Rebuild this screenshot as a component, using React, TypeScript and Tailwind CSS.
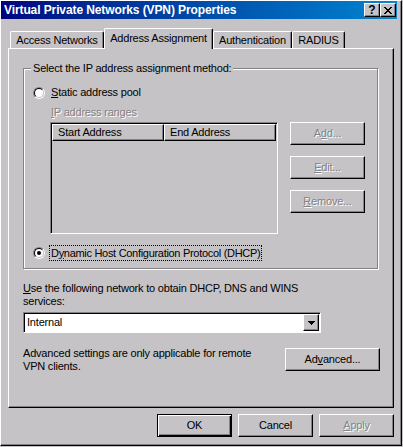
import React from "react";

const raised =
  "border border-t-white border-l-white border-r-black border-b-black shadow-[inset_-1px_-1px_0_#848284]";
const sunken =
  "border border-t-[#848284] border-l-[#848284] border-r-white border-b-white shadow-[inset_1px_1px_0_#000]";
const disabledText = "text-[#848284] [text-shadow:1px_1px_0_#fff]";

interface BtnProps {
  children: React.ReactNode;
  disabled?: boolean;
  isDefault?: boolean;
  width?: string;
}

const Btn: React.FC<BtnProps> = ({ children, disabled, isDefault, width }) => {
  const frame = isDefault
    ? "border border-black shadow-[inset_1px_1px_0_#fff,inset_-1px_-1px_0_#000,inset_-2px_-2px_0_#848284]"
    : raised;
  return (
    <div
      className={`${width ?? "w-[75px]"} h-[23px] shrink-0 flex items-center justify-center bg-[#c6c3c6] ${frame} ${
        disabled ? disabledText : "text-black"
      }`}
    >
      <span>{children}</span>
    </div>
  );
};

const Radio: React.FC<{ checked?: boolean }> = ({ checked }) => (
  <div className="w-[12px] h-[12px] shrink-0 rounded-full border border-t-[#848284] border-l-[#848284] border-r-white border-b-white">
    <div className="w-full h-full rounded-full border border-t-black border-l-black border-r-[#c6c3c6] border-b-[#c6c3c6] bg-white flex items-center justify-center">
      {checked && <div className="w-[4px] h-[4px] rounded-full bg-black" />}
    </div>
  </div>
);

const CloseGlyph = () => (
  <svg width="8" height="7" viewBox="0 0 8 7" shapeRendering="crispEdges">
    <rect x="0" y="0" width="2" height="1" />
    <rect x="6" y="0" width="2" height="1" />
    <rect x="1" y="1" width="2" height="1" />
    <rect x="5" y="1" width="2" height="1" />
    <rect x="2" y="2" width="4" height="1" />
    <rect x="3" y="3" width="2" height="1" />
    <rect x="2" y="4" width="4" height="1" />
    <rect x="1" y="5" width="2" height="1" />
    <rect x="5" y="5" width="2" height="1" />
    <rect x="0" y="6" width="2" height="1" />
    <rect x="6" y="6" width="2" height="1" />
  </svg>
);

const TitleBar = () => (
  <div className="w-[396px] h-[18px] shrink-0 flex items-center pl-[3px] pr-[1px] bg-linear-to-r from-[#000080] to-[#1084d0]">
    <span className="text-white font-bold text-[12px] tracking-[-0.1px]">
      Virtual Private Networks (VPN) Properties
    </span>
    <div className="ml-auto flex">
      <div className={`w-[16px] h-[14px] bg-[#c6c3c6] flex items-center justify-center ${raised}`}>
        <span className="font-bold text-[12px] leading-[12px] tracking-normal">?</span>
      </div>
      <div className={`w-[16px] h-[14px] bg-[#c6c3c6] flex items-center justify-center ${raised}`}>
        <CloseGlyph />
      </div>
    </div>
  </div>
);

const tabs = [
  { label: "Access Networks", w: "w-[94px]" },
  { label: "Address Assignment", w: "w-[109px]", active: true },
  { label: "Authentication", w: "w-[79px]" },
  { label: "RADIUS", w: "w-[53px]" },
];

const Tabs = () => (
  <div className="h-[20px] ml-[2px] flex items-end">
    {tabs.map((t) =>
      t.active ? (
        <div
          key={t.label}
          className={`${t.w} h-[21px] -mb-[1px] relative z-10 bg-[#c6c3c6] flex items-center justify-center pb-[1px] rounded-t-[2px] border-t border-l border-r border-t-white border-l-white border-r-black shadow-[inset_-1px_0_0_#848284]`}
        >
          {t.label}
        </div>
      ) : (
        <div
          key={t.label}
          className={`${t.w} h-[17px] bg-[#c6c3c6] flex items-center justify-center rounded-t-[2px] border-t border-l border-r border-t-white border-l-white border-r-black shadow-[inset_-1px_0_0_#848284]`}
        >
          {t.label}
        </div>
      )
    )}
  </div>
);

const AddressList = () => (
  <div className={`w-[228px] h-[112px] bg-[#c6c3c6] ${sunken} p-[1px]`}>
    <div className="flex">
      <div className={`w-[112px] h-[17px] flex items-center pl-[5px] ${raised}`}>Start Address</div>
      <div className={`w-[112px] h-[17px] flex items-center pl-[5px] ${raised}`}>End Address</div>
    </div>
  </div>
);

const App: React.FC = () => {
  return (
    <div className="w-[403px] h-[447px] bg-[#c6c3c6] font-['Liberation_Sans',Arial,sans-serif] text-[11px] leading-[13px] tracking-[-0.2px] text-black select-none">
      <div className="w-[402px] h-[446px] flex flex-col border border-t-white border-l-white border-r-black border-b-black shadow-[inset_-1px_-1px_0_#848284]">
        <TitleBar />
        <div className="pl-[7px] mt-[9px] flex flex-col">
          <Tabs />
          <div className={`w-[386px] h-[360px] flex flex-col ${raised}`}>
            {/* group box */}
            <div className="ml-[14px] mt-[19px] w-[355px] h-[201px] relative flex flex-col border border-[#848284] shadow-[inset_1px_1px_0_#fff,1px_1px_0_#fff]">
              <span className="absolute left-[7px] top-[-7px] px-[2px] bg-[#c6c3c6]">
                Select the IP address assignment method:
              </span>
              <div className="mt-[17px] ml-[9px] h-[13px] flex items-center gap-[6px]">
                <Radio />
                <span>
                  <u>S</u>tatic address pool
                </span>
              </div>
              <div className={`mt-[7px] ml-[27px] h-[13px] ${disabledText}`}>
                <u>I</u>P address ranges
              </div>
              <div className="mt-[3px] ml-[26px] flex">
                <AddressList />
                <div className="ml-[12px] flex flex-col gap-[11px]">
                  <Btn disabled>
                    A<u>d</u>d...
                  </Btn>
                  <Btn disabled>
                    <u>E</u>dit...
                  </Btn>
                  <Btn disabled>
                    <u>R</u>emove...
                  </Btn>
                </div>
              </div>
              <div className="mt-[11px] ml-[9px] h-[16px] flex items-center gap-[4px]">
                <Radio checked />
                <span className="h-[16px] flex items-center px-[1px] border border-dotted border-black tracking-[-0.3px]">
                  D<u>y</u>namic Host Configuration Protocol (DHCP)
                </span>
              </div>
            </div>

            <div className="ml-[14px] mt-[13px]">
              <u>U</u>se the following network to obtain DHCP, DNS and WINS
              <br />
              services:
            </div>

            <div className={`ml-[14px] mt-[4px] w-[298px] h-[21px] bg-white flex items-center ${sunken} p-[1px]`}>
              <span className="flex-1 pl-[2px]">Internal</span>
              <div className={`w-[16px] h-[17px] bg-[#c6c3c6] flex items-center justify-center ${raised}`}>
                <svg width="7" height="4" viewBox="0 0 7 4" shapeRendering="crispEdges">
                  <polygon points="0,0 7,0 3.5,4" fill="#000" />
                </svg>
              </div>
            </div>

            <div className="ml-[14px] mt-[14px] flex items-start">
              <div className="w-[262px]">
                Advanced settings are only applicable for remote
                <br />
                VPN clients.
              </div>
              <div className="mt-[1px]">
                <Btn width="w-[95px]">
                  Ad<u>v</u>anced...
                </Btn>
              </div>
            </div>
          </div>

          <div className="mt-[6px] w-[386px] flex justify-end gap-[6px]">
            <Btn isDefault>OK</Btn>
            <Btn>Cancel</Btn>
            <Btn disabled>
              <u>A</u>pply
            </Btn>
          </div>
        </div>
      </div>
    </div>
  );
};

export default App;
